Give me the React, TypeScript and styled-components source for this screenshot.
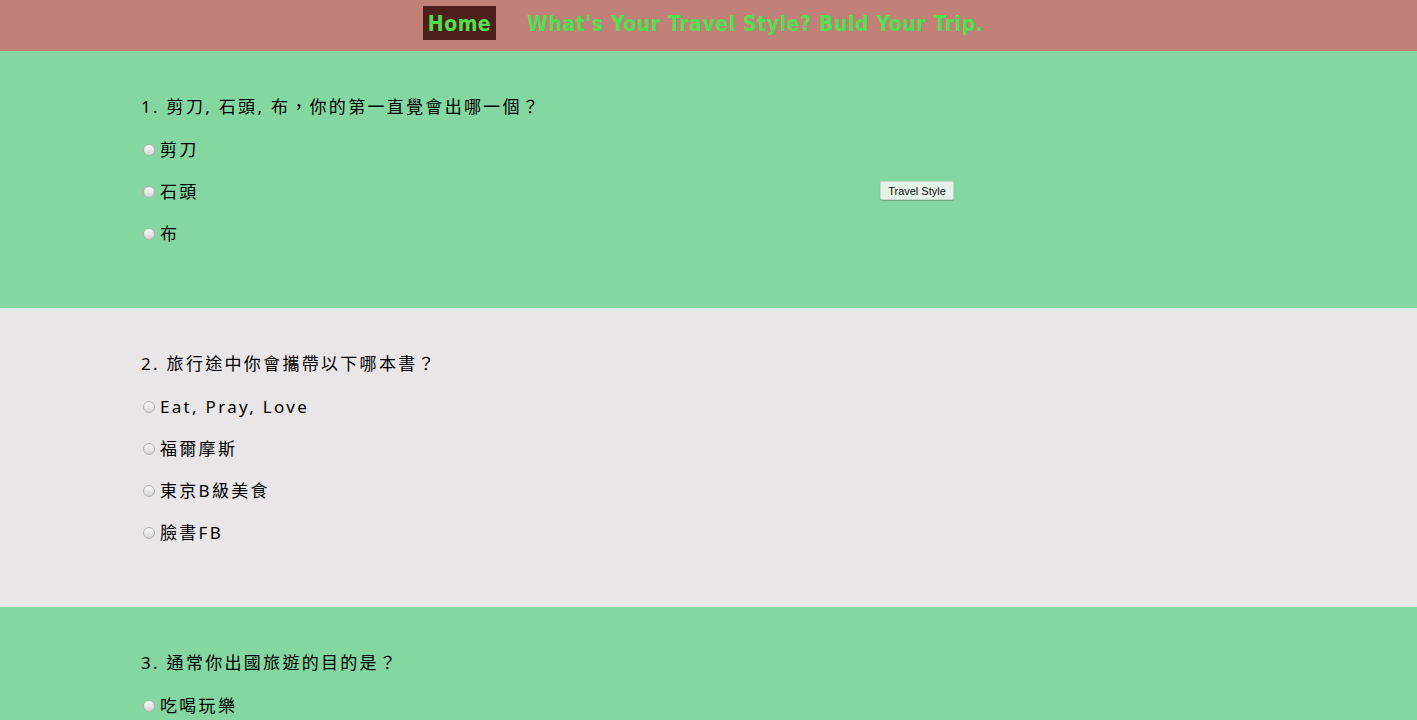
import React from "react";
import styled, { createGlobalStyle } from "styled-components";

const Global = createGlobalStyle`
  html, body { margin: 0; padding: 0; }
  body { font-family: "Noto Sans", "Noto Sans CJK TC", sans-serif; }
`;

const Header = styled.header`
  height: 51px;
  background: #c18078;
  display: flex;
  align-items: flex-start;
  padding-left: 423px;
  box-sizing: border-box;
`;

const HomeLink = styled.a`
  margin-top: 6px;
  height: 34px;
  width: 73px;
  justify-content: center;
  background: #4e201c;
  color: #50e050;
  font-family: "DejaVu Sans Condensed", "DejaVu Sans", sans-serif;
  font-stretch: condensed;
  font-weight: bold;
  font-size: 21px;
  letter-spacing: 0.5px;
  display: flex;
  align-items: center;
  padding-top: 2px;
  box-sizing: border-box;
  text-decoration: none;
`;

const Title = styled.h1`
  margin: 0 0 0 31px;
  height: 48px;
  display: flex;
  align-items: center;
  font-family: "DejaVu Sans Condensed", "DejaVu Sans", sans-serif;
  font-stretch: condensed;
  font-size: 21px;
  font-weight: bold;
  letter-spacing: 0.6px;
  color: #50e050;
`;

const Section = styled.section<{ $bg: string }>`
  background: ${(p) => p.$bg};
  display: flex;
  align-items: flex-start;
  padding: 46px 0 64px 141px;
`;

const Block = styled.div`
  width: 739px;
  display: flex;
  flex-direction: column;
  gap: 22px;
`;

const Question = styled.p`
  margin: 0 0 1px 0;
  height: 20px;
  line-height: 20px;
  font-size: 17px;
  letter-spacing: 2.3px;
  color: #000;
  white-space: nowrap;
`;

const Option = styled.label`
  display: flex;
  align-items: center;
  height: 20px;
  line-height: 20px;
  font-size: 17px;
  letter-spacing: 2.3px;
  color: #000;
`;

const Radio = styled.input`
  appearance: none;
  width: 12px;
  height: 12px;
  margin: 0 5px 0 2px;
  border-radius: 50%;
  border: 1px solid #b0b0b0;
  box-sizing: border-box;
  background: linear-gradient(#fafafa, #d6d6d6);
`;

const StyleButton = styled.button`
  margin-top: 84px;
  height: 19px;
  width: 74px;
  padding: 0;
  font-family: "Liberation Sans", Arial, sans-serif;
  font-size: 11px;
  color: #111;
  background: #e3f3e8;
  border: 1px solid #c8d8cc;
  border-radius: 2px;
  box-shadow: 0 1px 1px rgba(0,0,0,0.2);
`;

type Q = { title: string; options: string[] };

const questions: Q[] = [
  { title: "1. 剪刀, 石頭, 布，你的第一直覺會出哪一個？", options: ["剪刀", "石頭", "布"] },
  { title: "2. 旅行途中你會攜帶以下哪本書？", options: ["Eat, Pray, Love", "福爾摩斯", "東京B級美食", "臉書FB"] },
  { title: "3. 通常你出國旅遊的目的是？", options: ["吃喝玩樂"] },
];

export default function App() {
  return (
    <>
      <Global />
      <Header>
        <HomeLink href="#">Home</HomeLink>
        <Title>What's Your Travel Style? Buld Your Trip.</Title>
      </Header>
      {questions.map((q, i) => (
        <Section key={i} $bg={i % 2 === 0 ? "#84d7a0" : "#e8e6e7"}>
          <Block>
            <Question>{q.title}</Question>
            {q.options.map((o) => (
              <Option key={o}>
                <Radio type="radio" name={`q${i}`} />
                {o}
              </Option>
            ))}
          </Block>
          {i === 0 && <StyleButton>Travel Style</StyleButton>}
        </Section>
      ))}
    </>
  );
}
